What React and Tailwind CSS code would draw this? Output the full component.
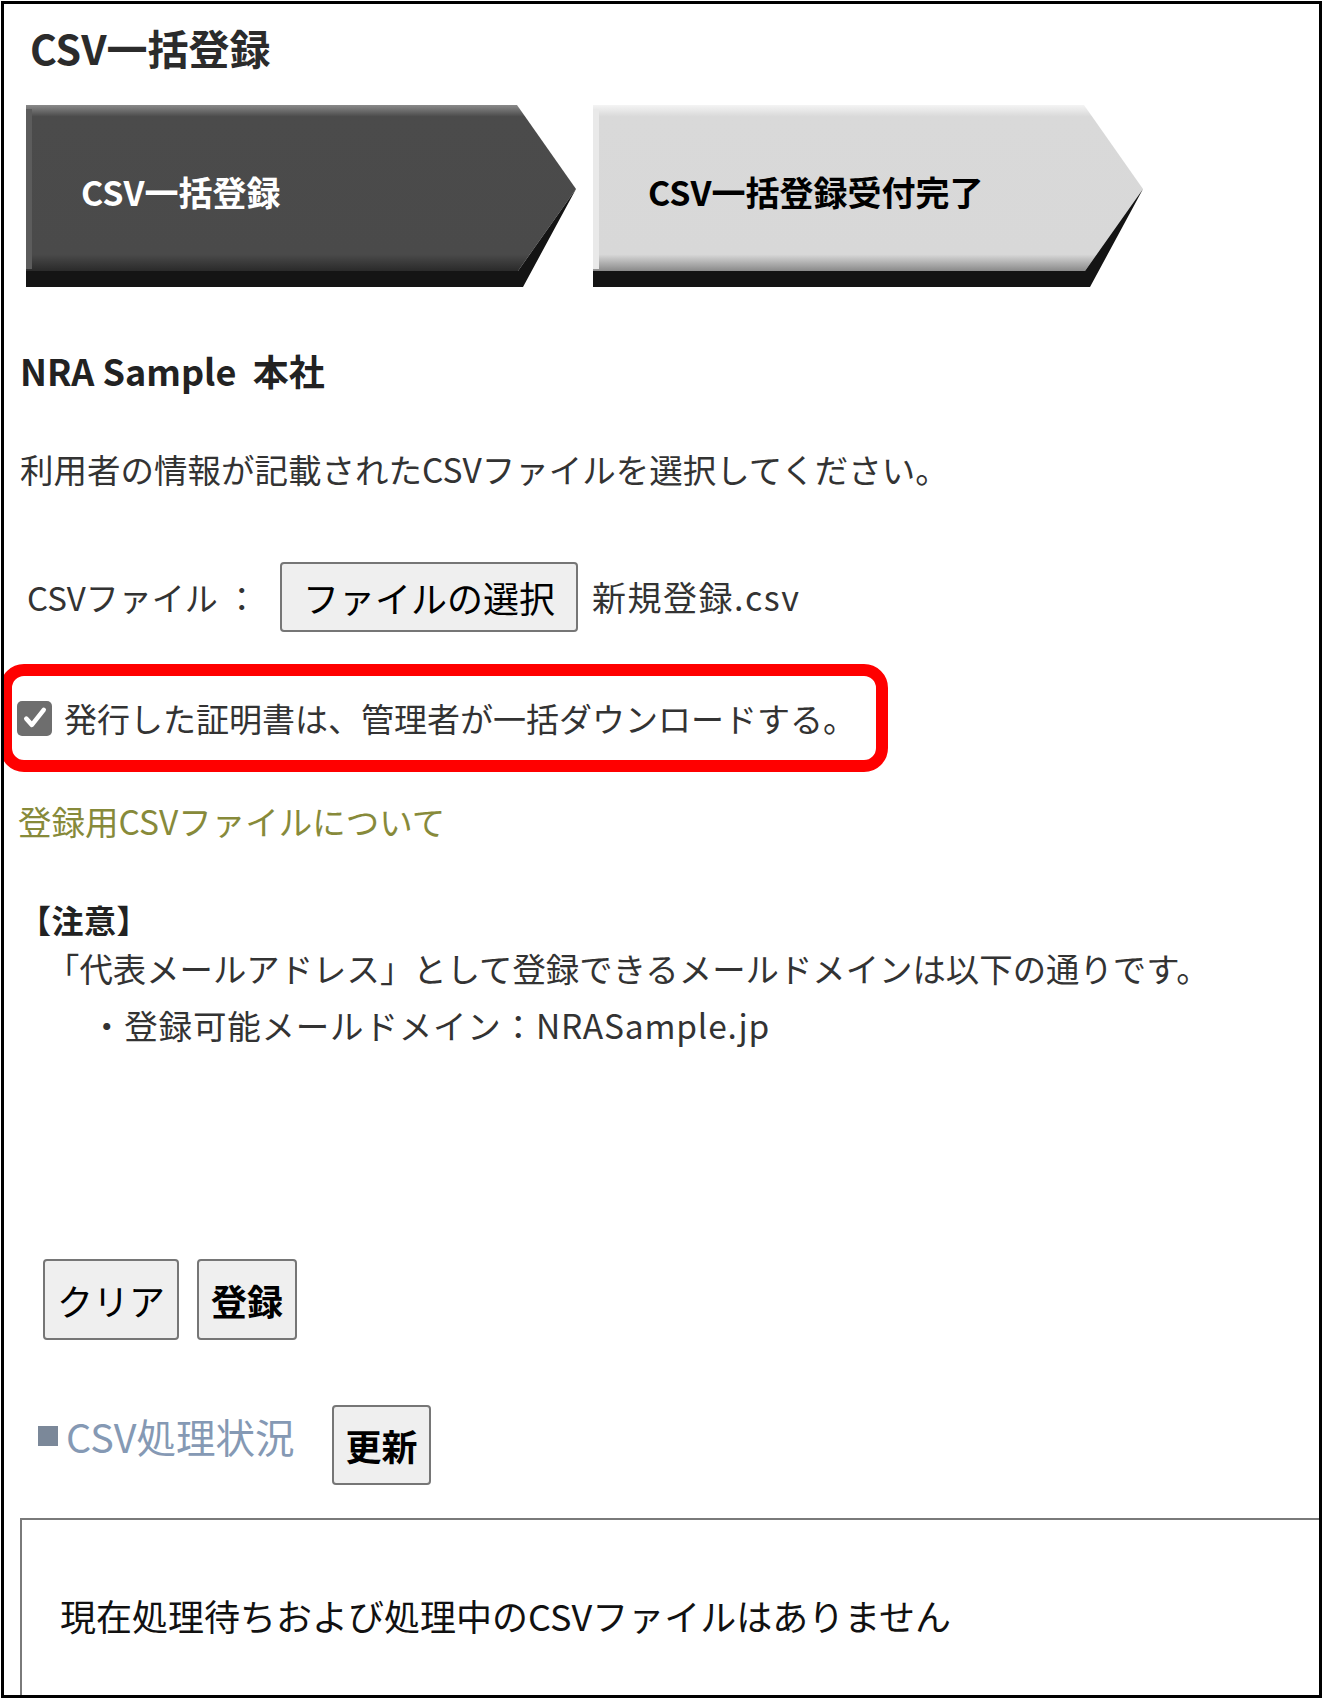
import React from "react";

function Arrow({ dark, children }) {
  const id = dark ? "gd" : "gl";
  return (
    <div className="relative w-[550px] h-[182px]">
      <svg className="absolute inset-0" width="550" height="182" viewBox="0 0 550 182">
        <defs>
          {dark ? (
            <linearGradient id={id} x1="0" y1="0" x2="0" y2="1">
              <stop offset="0" stopColor="#8a8a8a" />
              <stop offset="0.07" stopColor="#4b4b4b" />
              <stop offset="0.9" stopColor="#4a4a4a" />
              <stop offset="1" stopColor="#2a2a2a" />
            </linearGradient>
          ) : (
            <linearGradient id={id} x1="0" y1="0" x2="0" y2="1">
              <stop offset="0" stopColor="#f4f4f4" />
              <stop offset="0.07" stopColor="#d9d9d9" />
              <stop offset="0.9" stopColor="#d8d8d8" />
              <stop offset="1" stopColor="#8a8a8a" />
            </linearGradient>
          )}
        </defs>
        <polygon points="0,0 491,0 550,84 492,166 0,166" fill={`url(#${id})`} />
        <polygon points="550,84 497,182 0,182 0,166 492,166" fill="#141414" />
        <rect x="0" y="4" width="6" height="160" fill={dark ? "#5c5c5c" : "#e9e9e9"} />
      </svg>
      <div
        className={
          "relative flex h-[174px] items-center pl-[55px] text-[34px] font-bold leading-none " +
          (dark ? "text-white" : "text-black")
        }
      >
        {children}
      </div>
    </div>
  );
}

function Btn({ children, className }) {
  return (
    <button
      className={
        "flex items-center justify-center rounded-[4px] border-2 border-[#767676] bg-[#efefef] text-[36px] leading-none text-black " +
        className
      }
    >
      {children}
    </button>
  );
}

export default function App() {
  return (
    <div className="w-[1323px] h-[1699px] bg-white p-[1px] font-['Noto_Sans_CJK_JP',sans-serif] text-[#333]">
      <div className="flex h-full flex-col overflow-hidden border-[3px] border-black">
        <h1 className="mt-[19px] pl-[26px] text-[41px] font-bold leading-[48px] text-[#2b2b2b]">CSV一括登録</h1>

        <div className="mt-[34px] flex gap-[17px] pl-[22px]">
          <Arrow dark>CSV一括登録</Arrow>
          <Arrow>CSV一括登録受付完了</Arrow>
        </div>

        <div className="mt-[61px] pl-[16px] text-[36px] font-bold leading-[44px] text-[#222]">
          NRA Sample&nbsp;&nbsp;本社
        </div>

        <p className="mt-[55px] pl-[16px] text-[33.5px] leading-[44px]">
          利用者の情報が記載されたCSVファイルを選択してください。
        </p>

        <div className="mt-[71px] flex items-center pl-[23px] text-[33px] leading-[44px]">
          <span className="w-[253px]">CSVファイル ：</span>
          <Btn className="h-[70px] w-[298px]">ファイルの選択</Btn>
          <span className="ml-[14px] text-[34px] tracking-[1.5px]">新規登録.csv</span>
        </div>

        <div className="-ml-[4px] mt-[32px] flex h-[108px] w-[888px] items-center rounded-[24px] border-[12px] border-[#ff0000] pl-[5px]">
          <span className="flex h-[35px] w-[35px] items-center justify-center rounded-[5px] bg-[#6e6e6e]">
            <svg width="30" height="30" viewBox="0 0 24 24" fill="none" stroke="white" strokeWidth="3.6" strokeLinecap="round" strokeLinejoin="round">
              <path d="M5 12.5l4.5 5L19 5.5" />
            </svg>
          </span>
          <span className="ml-[12px] text-[33px] leading-[44px]">発行した証明書は、管理者が一括ダウンロードする。</span>
        </div>

        <a className="mt-[27px] pl-[14px] text-[33.5px] leading-[44px] text-[#878a3a]">登録用CSVファイルについて</a>

        <div className="mt-[54px] pl-[15px] text-[32px] font-bold leading-[44px] text-[#222] tracking-[0.5px]">【注意】</div>
        <p className="mt-[5px] pl-[42px] text-[33.4px] leading-[44px]">
          「代表メールアドレス」として登録できるメールドメインは以下の通りです。
        </p>
        <p className="mt-[13px] pl-[86px] text-[33.5px] leading-[44px] tracking-[0.8px]">
          ・登録可能メールドメイン：NRASample.jp
        </p>

        <div className="mt-[212px] flex gap-[18px] pl-[39px]">
          <Btn className="h-[81px] w-[136px]">クリア</Btn>
          <Btn className="h-[81px] w-[100px] font-bold">登録</Btn>
        </div>

        <div className="mt-[65px] flex items-start pl-[34px]">
          <span className="mt-[9px] flex w-[294px] items-center text-[39.5px] leading-[44px] text-[#8599b4]">
            <span className="mr-[8px] h-[20px] w-[20px] bg-[#7b8899]"></span>
            CSV処理状況
          </span>
          <Btn className="h-[80px] w-[99px] font-bold">更新</Btn>
        </div>

        <div className="ml-[16px] mt-[33px] flex-1 border-l-2 border-t-2 border-[#7a7a7a] pl-[38px] pt-[73px]">
          <p className="text-[36px] leading-[44px] text-[#111]">現在処理待ちおよび処理中のCSVファイルはありません</p>
        </div>
      </div>
    </div>
  );
}
